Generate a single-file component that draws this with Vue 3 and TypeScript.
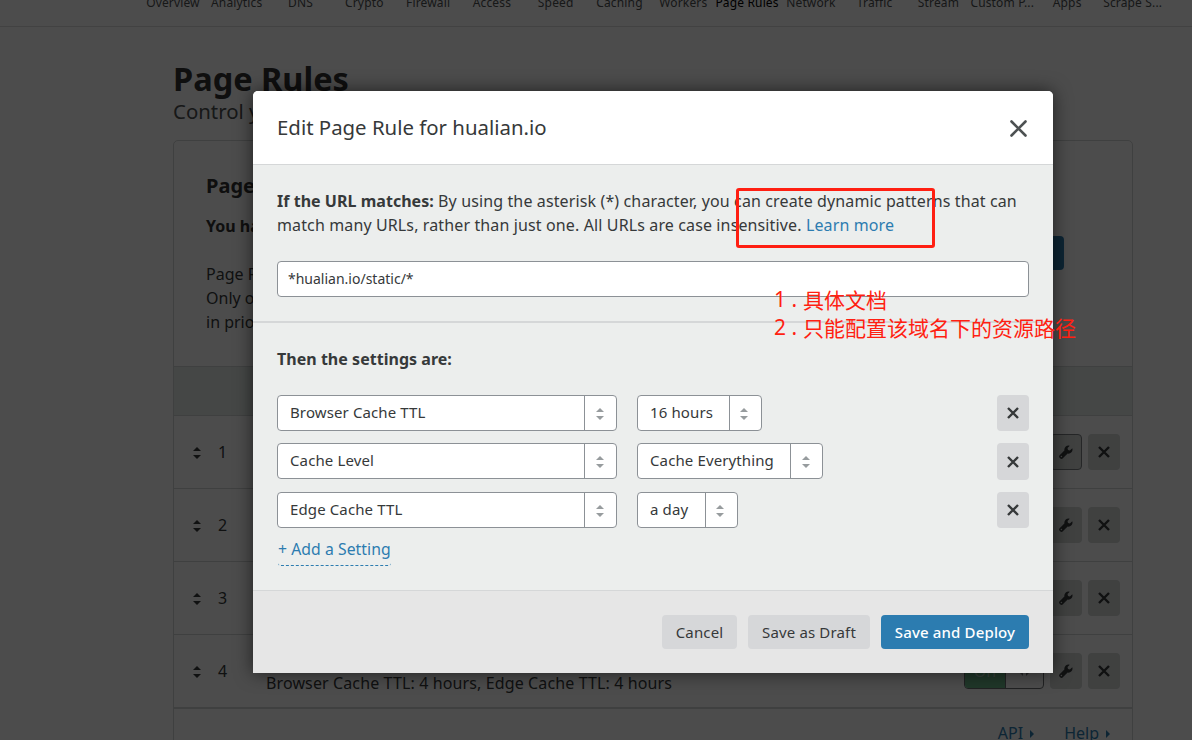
<script setup lang="ts">
interface Setting {
  name: string
  value: string
  size: string
}

const tabs: string[] = [
  'Overview', 'Analytics', 'DNS', 'Crypto', 'Firewall', 'Access', 'Speed', 'Caching',
  'Workers', 'Page Rules', 'Network', 'Traffic', 'Stream', 'Custom P...', 'Apps', 'Scrape S...',
]

const rules: { id: number; detail?: string }[] = [
  { id: 1 },
  { id: 2 },
  { id: 3 },
  { id: 4, detail: 'Browser Cache TTL: 4 hours, Edge Cache TTL: 4 hours' },
]

const settings: Setting[] = [
  { name: 'Browser Cache TTL', value: '16 hours', size: 'w-hours' },
  { name: 'Cache Level', value: 'Cache Everything', size: 'w-level' },
  { name: 'Edge Cache TTL', value: 'a day', size: 'w-day' },
]
</script>

<template>
  <div class="screen">
    <div class="page">
      <nav class="tabs">
        <span v-for="t in tabs" :key="t" class="tab" :class="{ current: t === 'Page Rules' }">{{ t }}</span>
      </nav>

      <main class="content">
        <h1>Page Rules</h1>
        <p class="lead">Control your</p>

        <section class="panel">
          <div class="intro">
            <div>
              <h2>Page Rules</h2>
              <p class="strong">You have</p>
              <p class="text">Page Rules<br />Only one<br />in priority</p>
            </div>
            <div class="create"></div>
          </div>
          <div class="strip"></div>
          <div v-for="r in rules" :key="r.id" class="rule">
            <svg class="sort" width="8" height="12" viewBox="0 0 8 12"><path d="M0 4 4 0l4 4zM0 8l4 4 4-4z" /></svg>
            <span class="num">{{ r.id }}</span>
            <span class="detail">{{ r.detail }}</span>
            <span class="toggle"><b>On</b><i><svg width="11" height="8" viewBox="0 0 11 8"><path d="M4 0v8L0 4zM7 0v8l4-4z" /></svg></i></span>
            <span class="tool" :class="{ focused: r.id === 1 }">
              <svg width="14" height="14" viewBox="0 0 14 14"><path d="M13.300 3.200 10.900 5.500 9 5 8.500 3.100 10.800.7A4.200 4.200 0 0 0 5.400 5.400L.9 9.900a2.200 2.200 0 0 0 0 3.200 2.200 2.200 0 0 0 3.200 0L8.600 8.600A4.200 4.200 0 0 0 13.300 3.200zM2.400 12.300a.8.8 0 1 1 0-1.600.8.8 0 0 1 0 1.600z" /></svg>
            </span>
            <span class="tool">
              <svg width="12" height="12" viewBox="0 0 12 12"><path class="cross" d="M1 1l10 10M11 1 1 11" /></svg>
            </span>
          </div>
          <div class="links">
            <span>API<svg width="4" height="8" viewBox="0 0 4 8"><path d="M0 0l4 4-4 4z" /></svg></span>
            <span>Help<svg width="4" height="8" viewBox="0 0 4 8"><path d="M0 0l4 4-4 4z" /></svg></span>
          </div>
        </section>
      </main>
    </div>

    <div class="overlay">
      <div class="modal">
        <header class="head">
          <span class="title">Edit Page Rule for hualian.io</span>
          <svg class="close" width="17" height="17" viewBox="0 0 17 17"><path d="M1.500 1.500l14 14M15.500 1.500l-14 14" /></svg>
        </header>
        <div class="match">
          <p><strong>If the URL matches:</strong> By using the asterisk (*) character, you can create dynamic patterns that can<br />match many URLs, rather than just one. All URLs are case insensitive. <a>Learn more</a></p>
          <div class="input">*hualian.io/static/*</div>
        </div>
        <div class="settings">
          <p><strong>Then the settings are:</strong></p>
          <div class="grid">
            <div v-for="s in settings" :key="s.name" class="row">
              <div class="select w-name">
                <span>{{ s.name }}</span>
                <i><svg width="8" height="12" viewBox="0 0 8 12"><path d="M0 4 4 0l4 4zM0 8l4 4 4-4z" /></svg></i>
              </div>
              <div class="select" :class="s.size">
                <span>{{ s.value }}</span>
                <i><svg width="8" height="12" viewBox="0 0 8 12"><path d="M0 4 4 0l4 4zM0 8l4 4 4-4z" /></svg></i>
              </div>
              <div class="remove"><svg width="12" height="12" viewBox="0 0 12 12"><path class="cross" d="M1 1l10 10M11 1 1 11" /></svg></div>
            </div>
          </div>
          <a class="add">+ Add a Setting</a>
        </div>
        <footer class="foot">
          <span class="btn cancel">Cancel</span>
          <span class="btn draft">Save as Draft</span>
          <span class="btn deploy">Save and Deploy</span>
        </footer>
      </div>
    </div>

    <div class="mark"></div>
    <div class="note">
      <div><span>1 .</span>具体文档</div>
      <div><span>2 .</span>只能配置该域名下的资源路径</div>
    </div>
  </div>
</template>

<style>
body { margin: 0; overflow: hidden; }
</style>

<style scoped>
* { box-sizing: border-box; }
p, h1, h2 { margin: 0; }
i { font-style: normal; }
svg { display: block; }
.screen {
  position: relative;
  width: 1192px;
  height: 740px;
  overflow: hidden;
  font: 15px/24px "Noto Sans", "Open Sans", sans-serif;
  color: #36393a;
  white-space: nowrap;
}
.page { height: 740px; overflow: hidden; background: #fff; }
.tabs {
  display: flex;
  height: 27px;
  padding-left: 141px;
  border-bottom: 1px solid #dedede;
}
.tab {
  flex: 0 0 63.8px;
  display: flex;
  justify-content: center;
  height: 18px;
  margin-top: -6px;
  font-size: 12px;
  line-height: 18px;
  letter-spacing: 0.15px;
  color: #4d5152;
}
.tab.current { color: #000; }
.tab:nth-child(15) { flex-basis: 66px; }
.tab:last-child { flex-basis: 65px; }
.content { width: 960px; margin-left: 173px; }
h1 { height: 72px; padding-top: 32px; font-size: 32.5px; line-height: 40px; color: #333; }
.lead { height: 41px; font-size: 20.4px; line-height: 24px; color: #4d5152; }
.panel { height: 640px; border: 1px solid #d3d6d6; border-radius: 5px; }
.intro { display: flex; justify-content: space-between; height: 225px; padding: 33px 68px 0 32px; }
h2 { font-size: 20px; line-height: 24px; color: #333; }
.strong { margin-top: 16px; font-size: 16px; font-weight: 700; color: #333; }
.text { margin-top: 24px; font-size: 16px; }
.create { width: 150px; height: 34px; margin-top: 62px; border-radius: 4px; background: #2c7cb0; }
.strip { height: 50px; border: solid #d3d6d6; border-width: 1px 0; background: #e8eeec; }
.rule {
  display: flex;
  align-items: center;
  height: 73px;
  padding: 0 12px 0 19px;
  border-bottom: 1px solid #d3d6d6;
}
.rule:nth-of-type(6) { height: 74px; border-bottom-width: 2px; }
.sort { margin-top: 1px; fill: #36393a; }
.num { width: 24px; margin-left: 17px; font-size: 16px; }
.detail { flex: 1; margin-left: 24px; padding-top: 23px; font-size: 16px; letter-spacing: 0.12px; }
.toggle { display: flex; width: 80px; height: 36px; border: 1px solid #6d7173; border-radius: 4px; overflow: hidden; }
.toggle b { width: 40px; background: #6bb88a; color: #b9d8c5; font-size: 16px; font-weight: 400; text-align: center; line-height: 34px; }
.toggle i { display: flex; flex: 1; align-items: center; justify-content: center; padding-top: 1px; border-left: 1px solid #6d7173; fill: #7d8183; }
.tool {
  display: flex;
  align-items: center;
  justify-content: center;
  width: 32px;
  height: 36px;
  margin-left: 6px;
  border-radius: 4px;
  background: #d5d9d8;
  fill: #36393a;
}
.tool.focused { border: 1px solid #7c8184; }
.cross { fill: none; stroke: #36393a; stroke-width: 2.4; }
.links { display: flex; justify-content: flex-end; gap: 30px; padding: 12px 22px 0 0; font-size: 16px; color: #2c7cb0; }
.links span { display: flex; align-items: center; gap: 7px; }
.links svg { margin-top: 2px; fill: #2c7cb0; }

.overlay { position: absolute; inset: 0; padding: 91px 0 0 253px; background: rgba(0, 0, 0, 0.7); }
.modal { width: 800px; height: 582px; border-radius: 5px 5px 0 0; background: #eceeed; box-shadow: 0 0 18px rgba(0, 0, 0, 0.6); }
.head {
  display: flex;
  align-items: center;
  justify-content: space-between;
  height: 74px;
  padding: 0 26px 0 24px;
  border-bottom: 1px solid #d5d7d8;
  border-radius: 5px 5px 0 0;
  background: #fff;
}
.title { margin-top: -2px; font-size: 20.4px; }
.close { margin-top: 1px; }
.close path { stroke: #4d5152; stroke-width: 2.6; stroke-linecap: round; }
.match { height: 158px; padding: 24px 24px 0; border-bottom: 2px solid #d5d7d8; }
.match p { font-size: 16px; letter-spacing: 0.125px; }
strong { font-size: 16px; letter-spacing: 0.03px; }
a { color: #2c7cb0; }
.input {
  height: 36px;
  margin-top: 24px;
  padding-left: 10px;
  border: 1px solid #8c9196;
  border-radius: 4px;
  background: #fff;
  font-size: 14px;
  line-height: 34px;
}
.settings { height: 267px; padding: 24px 24px 0; }
.settings p { height: 24px; font-size: 16px; }
.grid { display: grid; grid-template-rows: 36px 37px 36px; gap: 12px; margin-top: 24px; }
.row { display: flex; gap: 20px; }
.select { display: flex; height: 36px; border: 1px solid #8c9196; border-radius: 4px; background: #fff; }
.select span { flex: 1; padding-left: 12px; line-height: 32px; letter-spacing: 0.12px; }
.select i { display: flex; align-items: center; justify-content: center; width: 32px; padding: 2px 2px 0 0; border-left: 1px solid #8c9196; }
.select svg { fill: #979c9e; }
.w-name { width: 340px; }
.w-hours { width: 125px; }
.w-level { width: 186px; }
.w-day { width: 101px; }
.w-hours i, .w-day i { padding-right: 3px; }
.remove { display: flex; align-items: center; justify-content: center; width: 32px; height: 100%; margin-left: auto; border-radius: 4px; background: #d6d7d9; }
.add { display: block; width: 113px; height: 29px; margin: 9px 0 0 1px; border-bottom: 1px dashed #2c7cb0; border-radius: 3px; font-size: 15.75px; letter-spacing: 0.05px; }
.foot { display: flex; justify-content: flex-end; gap: 11px; height: 83px; padding: 24px 24px 0; border-top: 1px solid #d5d7d8; background: #e6e6e6; }
.btn { height: 34px; border-radius: 4px; background: #d6d7d9; line-height: 34px; letter-spacing: 0.15px; text-align: center; }
.cancel { width: 75px; }
.draft { width: 122px; }
.deploy { width: 148px; background: #2c7cb0; color: #fff; font-weight: 500; }

.mark { position: absolute; left: 736px; top: 188px; width: 199px; height: 60px; border: 3px solid #ff1f12; border-radius: 3px; }
.note { position: absolute; left: 774px; top: 285px; font: 400 21px/28px "Noto Sans CJK SC", sans-serif; color: #ff1f12; }
.note div { display: flex; }
.note span { width: 29px; font-family: "Noto Sans", sans-serif; }
</style>
